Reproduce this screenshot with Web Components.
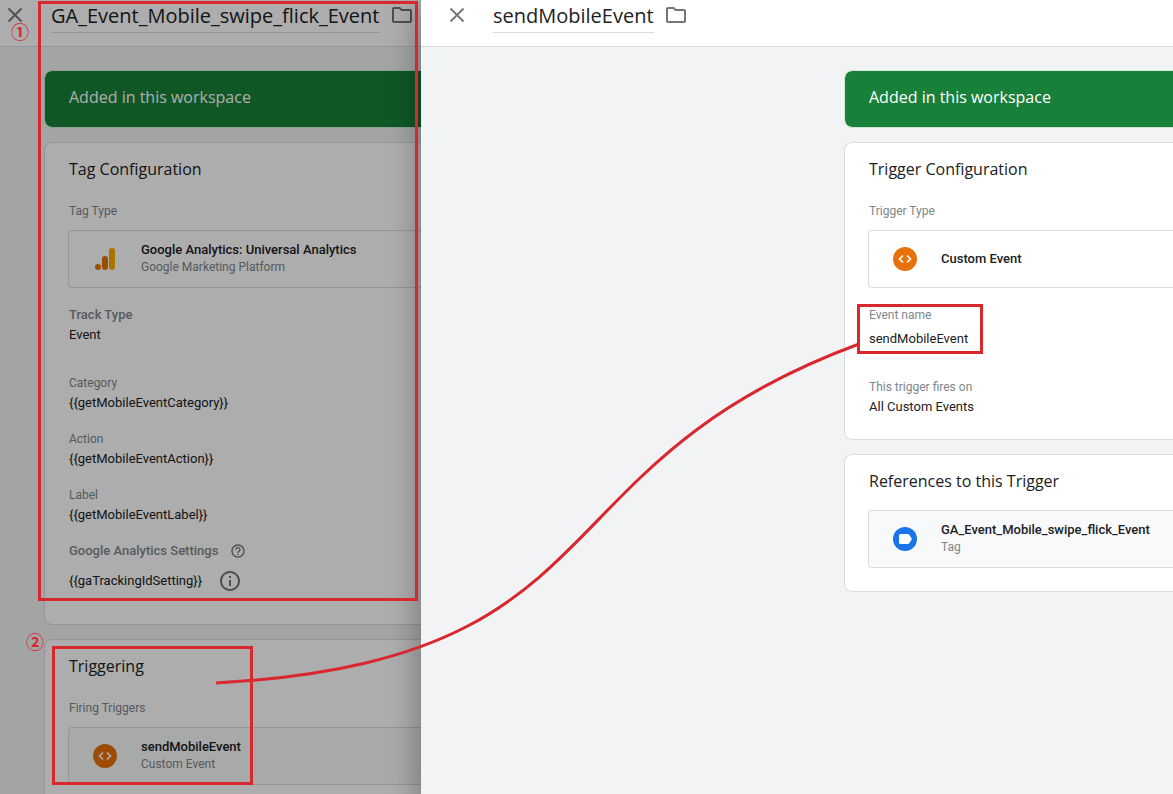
<!DOCTYPE html>
<html lang="en">
<head>
<meta charset="utf-8">
<title>Tag Manager</title>
<style>
  html, body { height: 100%; }
  body { margin: 0; overflow: hidden; font-family: Roboto, sans-serif; font-size: 13px; line-height: 20px; color: #202124; background: #f1f3f4; }
</style>
</head>
<body>
<tm-workspace>
  <tm-sheet slot="back" dimmed name="GA_Event_Mobile_swipe_flick_Event">
    <tm-banner>Added in this workspace</tm-banner>
    <tm-card heading="Tag Configuration" tall>
      <tm-label>Tag Type</tm-label>
      <tm-item icon="analytics"><span>Google Analytics: Universal Analytics</span><span slot="detail">Google Marketing Platform</span></tm-item>
      <tm-field strong label="Track Type">Event</tm-field>
      <tm-field apart label="Category">{{getMobileEventCategory}}</tm-field>
      <tm-field label="Action">{{getMobileEventAction}}</tm-field>
      <tm-field label="Label">{{getMobileEventLabel}}</tm-field>
      <tm-field strong settings label="Google Analytics Settings">{{gaTrackingIdSetting}}</tm-field>
    </tm-card>
    <tm-card heading="Triggering">
      <tm-label>Firing Triggers</tm-label>
      <tm-item icon="code" filled><span>sendMobileEvent</span><span slot="detail">Custom Event</span></tm-item>
    </tm-card>
  </tm-sheet>
  <tm-sheet slot="front" name="sendMobileEvent">
    <tm-banner>Added in this workspace</tm-banner>
    <tm-card heading="Trigger Configuration">
      <tm-label>Trigger Type</tm-label>
      <tm-item icon="code"><span>Custom Event</span></tm-item>
      <tm-field loose label="Event name">sendMobileEvent</tm-field>
      <tm-field apart label="This trigger fires on">All Custom Events</tm-field>
    </tm-card>
    <tm-card heading="References to this Trigger">
      <tm-item icon="tag" filled lead><span>GA_Event_Mobile_swipe_flick_Event</span><span slot="detail">Tag</span></tm-item>
    </tm-card>
  </tm-sheet>
  <tm-notes slot="notes"></tm-notes>
</tm-workspace>

<script>
const define = (name, html, setup) => {
  const template = document.createElement('template');
  template.innerHTML = html;
  customElements.define(name, class extends HTMLElement {
    connectedCallback() {
      if (this.shadowRoot) return;
      const root = this.attachShadow({ mode: 'open' });
      root.append(template.content.cloneNode(true));
      if (setup) setup(this, root);
    }
  });
};

const icons = {
  analytics: '<path fill="#f9ab00" d="M16 4a3 3 0 0 1 6 0v16a3 3 0 0 1-6 0z"/><path fill="#e37400" d="M9 12a3 3 0 0 1 6 0v8a3 3 0 0 1-6 0z"/><circle fill="#e37400" cx="5" cy="20" r="3"/>',
  code: '<circle cx="12" cy="12" r="12" fill="#e8710a"/><path d="M10 8.500 6.500 12 10 15.500M14 8.500 17.500 12 14 15.500" fill="none" stroke="#fff" stroke-width="1.700"/>',
  tag: '<circle cx="12" cy="12" r="12" fill="#1a73e8"/><path d="M7.500 7h7.300c.5 0 .9.200 1.200.6L19 12l-3 4.400c-.3.400-.7.600-1.200.6H7.500A1.500 1.500 0 0 1 6 15.500v-7A1.500 1.500 0 0 1 7.500 7z" fill="#fff"/>'
};

define('tm-workspace', `
  <style>
    :host { display: grid; grid-template-columns: minmax(0, 421fr) minmax(0, 752fr); min-height: 100vh; position: relative; overflow: hidden; }
  </style>
  <slot name="back"></slot><slot name="front"></slot><slot name="notes"></slot>`);

define('tm-sheet', `
  <style>
    :host { display: block; position: relative; background: #f1f3f4; --start: 24px; --column: 423px;
      box-shadow: 0 16px 24px 2px rgba(0,0,0,.16), 0 6px 30px 5px rgba(0,0,0,.16); z-index: 1; }
    :host([dimmed]) { --start: 3px; --column: 44px; z-index: 0; box-shadow: none; max-height: 100vh; overflow: hidden; }
    :host([dimmed])::after { content: ""; position: absolute; inset: 0; background: rgba(0,0,0,.32); pointer-events: none; }
    header { display: flex; align-items: flex-start; height: 46px; padding-left: var(--start); background: #fff; border-bottom: 1px solid #dadce0; box-sizing: content-box; }
    button { flex: none; width: 24px; height: 24px; padding: 0; border: 0; background: none; color: #757575; }
    .close { margin: 3px 24px 0 0; }
    .folder { margin: 3px 0 0 10px; }
    svg { display: block; }
    input { field-sizing: content; height: 33px; box-sizing: border-box; padding: 0 0 2px; border: 0; border-bottom: 1px solid #dadce0; background: none; color: #202124; font: 20px/30px "Open Sans", sans-serif; border-radius: 0; outline: none; }
    main { display: flex; flex-direction: column; gap: 14px; padding: 23px 0 24px var(--column); }
  </style>
  <header>
    <button class="close" aria-label="Close"><svg width="24" height="24" viewBox="0 0 24 24"><path d="M5.500 5.500l13 13M18.500 5.500l-13 13" stroke="currentColor" stroke-width="1.800" fill="none"/></svg></button>
    <input aria-label="Name">
    <button class="folder" aria-label="Move to folder"><svg width="24" height="24" viewBox="0 0 24 24"><path fill="currentColor" d="M9.170 6l2 2H20v10H4V6h5.170M10 4H4c-1.100 0-1.990.9-1.990 2L2 18c0 1.100.9 2 2 2h16c1.100 0 2-.9 2-2V8c0-1.100-.9-2-2-2h-8l-2-2z"/></svg></button>
  </header>
  <main><slot></slot></main>`,
  (host, root) => { root.querySelector('input').value = host.getAttribute('name'); });

define('tm-banner', `
  <style>
    :host { display: block; padding: 14px 24px 18px; line-height: 24px; font-family: "Open Sans", sans-serif; font-size: 16px; font-weight: 500; color: #fff;
      background: #188038; background-clip: padding-box; border: 1px solid #ceead6; border-right: 0; border-radius: 8px 0 0 8px; }
  </style>
  <slot></slot>`);

define('tm-card', `
  <style>
    :host { display: flex; flex-direction: column; padding: 14px 0 22px 24px; background: #fff; border: 1px solid #dadce0; border-right: 0; border-radius: 8px 0 0 8px; }
    :host([tall]) { padding-bottom: 33px; }
    h2 { margin: 0; font: 400 16px/24px "Open Sans", sans-serif; }
  </style>
  <h2></h2><slot></slot>`,
  (host, root) => { root.querySelector('h2').textContent = host.getAttribute('heading'); });

define('tm-label', `
  <style>:host { display: block; margin-top: 20px; font-size: 12px; color: #80868b; }</style>
  <slot></slot>`);

define('tm-item', `
  <style>
    :host { display: flex; align-items: center; gap: 24px; height: 56px; margin: 9px 0 0 -1px; padding-left: 24px; border: 1px solid #dadce0; border-right: 0; border-radius: 4px 0 0 4px; }
    :host([filled]) { background: #f8f9fa; }
    :host([lead]) { margin: 17px 0 1px -1px; }
    svg { flex: none; }
    .text { display: flex; flex-direction: column; gap: 1px; padding-bottom: 1px; line-height: 17px; }
    .name { font-weight: 500; }
    .detail { font-size: 12px; color: #80868b; }
  </style>
  <svg width="24" height="24" viewBox="0 0 24 24"></svg>
  <div class="text"><span class="name"><slot></slot></span><span class="detail"><slot name="detail"></slot></span></div>`,
  (host, root) => { root.querySelector('svg').innerHTML = icons[host.getAttribute('icon')]; });

define('tm-field', `
  <style>
    :host { display: block; margin-top: 16px; }
    :host([apart]) { margin-top: 28px; }
    :host([loose]), :host([strong]:not([settings])) { margin-top: 17px; }
    .label { display: flex; align-items: center; gap: 12px; height: 20px; font-size: 12px; color: #80868b; }
    :host([strong]) .label { font-size: 13px; font-weight: 500; color: #80868b; }
    .value { display: flex; align-items: center; gap: 16px; height: 20px; }
    :host([loose]) .value { margin-top: 4px; }
    :host([settings]) .value { margin-top: 10px; }
    button { display: none; padding: 0; border: 0; background: none; color: #757575; }
    :host([settings]) button { display: block; }
    svg { display: block; }
  </style>
  <div class="label"><span></span><button aria-label="Help"><svg width="16" height="16" viewBox="0 0 24 24"><path fill="currentColor" d="M11 18h2v-2h-2v2zm1-16C6.480 2 2 6.480 2 12s4.480 10 10 10 10-4.480 10-10S17.520 2 12 2zm0 18c-4.410 0-8-3.590-8-8s3.590-8 8-8 8 3.590 8 8-3.590 8-8 8zm0-14c-2.210 0-4 1.790-4 4h2c0-1.100.9-2 2-2s2 .9 2 2c0 2-3 1.750-3 5h2c0-2.250 3-2.500 3-5 0-2.210-1.790-4-4-4z"/></svg></button></div>
  <div class="value"><slot></slot><button aria-label="Information"><svg width="24" height="24" viewBox="0 0 24 24"><path fill="currentColor" d="M11 7h2v2h-2zm0 4h2v6h-2zm1-9C6.480 2 2 6.480 2 12s4.480 10 10 10 10-4.480 10-10S17.520 2 12 2zm0 18c-4.410 0-8-3.590-8-8s3.590-8 8-8 8 3.590 8 8-3.590 8-8 8z"/></svg></button></div>`,
  (host, root) => { root.querySelector('.label span').textContent = host.getAttribute('label'); });

define('tm-notes', `
  <style>
    :host { position: absolute; inset: 0; z-index: 2; pointer-events: none; color: #d9272e; }
    svg { position: absolute; top: 0; left: 0; }
    b { position: absolute; font: 700 18px/20px "Noto Sans CJK JP", sans-serif; }
    .one { left: 11px; top: 21px; }
    .two { left: 26px; top: 631px; }
  </style>
  <svg width="1173" height="794" viewBox="0 0 1173 794" fill="none" stroke="currentColor" stroke-width="3">
    <rect x="39.500" y="2.500" width="377" height="597"/>
    <rect x="53.500" y="647.500" width="198" height="136"/>
    <rect x="858.500" y="305.500" width="123" height="47"/>
    <path d="M216 683C628 660 528 466 859 344"/>
  </svg>
  <b class="one">①</b><b class="two">②</b>`);
</script>
</body>
</html>
